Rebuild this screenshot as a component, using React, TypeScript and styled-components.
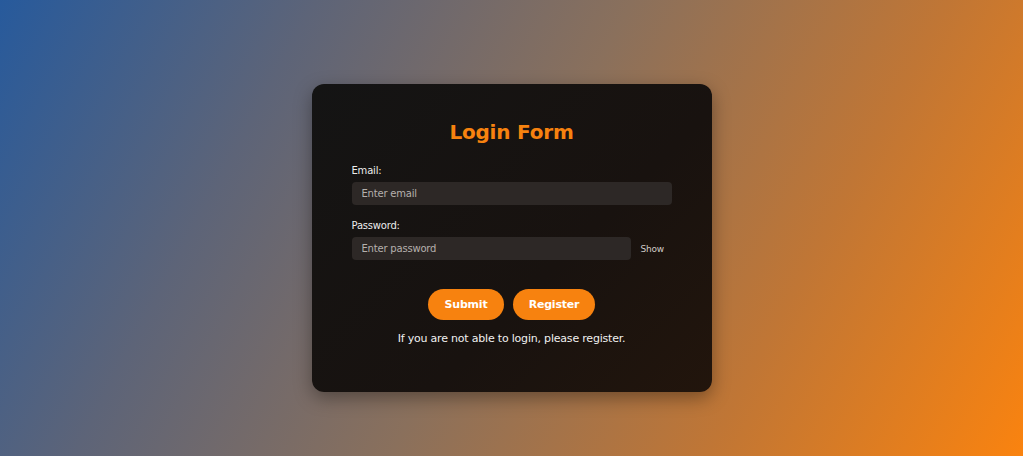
import React, { useState } from "react";
import styled, { createGlobalStyle } from "styled-components";

const Global = createGlobalStyle`
  html, body { margin: 0; padding: 0; }
  body {
    font-family: "DejaVu Sans", "Open Sans", sans-serif;
    width: 1023px;
    height: 456px;
    overflow: hidden;
  }
`;

const Page = styled.div`
  width: 1023px;
  height: 456px;
  box-sizing: border-box;
  background: linear-gradient(118deg, #275a9c 0%, #5d6478 25%, #8a705c 50%, #c07635 75%, #fa830f 100%);
  display: flex;
  justify-content: center;
  padding-top: 84px;
`;

const Card = styled.div`
  width: 400px;
  height: 308px;
  box-sizing: border-box;
  padding: 36px 40px 0;
  border-radius: 12px;
  background: linear-gradient(135deg, #141414 0%, #18120f 60%, #22150c 100%);
  box-shadow: 0 6px 18px rgba(0, 0, 0, 0.35);
  display: flex;
  flex-direction: column;
  color: #f2f2f2;
`;

const Title = styled.h1`
  margin: 0 0 20px;
  text-align: center;
  color: #f7820f;
  font-size: 20px;
  font-weight: 700;
  line-height: 24px;
  letter-spacing: -0.2px;
`;

const Field = styled.div`
  display: flex;
  flex-direction: column;
  gap: 5px;
  margin-bottom: 14px;
`;

const Label = styled.label`
  font-size: 10px;
  line-height: 13px;
  color: #ececec;
  letter-spacing: -0.2px;
`;

const InputRow = styled.div`
  display: flex;
  align-items: center;
  gap: 10px;
`;

const Input = styled.input`
  flex: 1;
  height: 23px;
  box-sizing: border-box;
  border: none;
  outline: none;
  border-radius: 4px;
  background: #2d2826;
  color: #ddd;
  padding: 0 10px;
  font-family: inherit;
  font-size: 10px;
  letter-spacing: -0.2px;
  &::placeholder { color: #b5b0ad; }
`;

const ShowToggle = styled.span`
  font-size: 9px;
  color: #cfcac7;
  width: 31px;
  letter-spacing: -0.2px;
  cursor: pointer;
`;

const Buttons = styled.div`
  display: flex;
  justify-content: center;
  gap: 9px;
  margin-top: 15px;
`;

const Button = styled.button<{ $w: number }>`
  width: ${(p) => p.$w}px;
  height: 31px;
  border: none;
  border-radius: 16px;
  background: #f7820f;
  color: #fff;
  font-family: inherit;
  font-weight: 700;
  font-size: 11px;
  letter-spacing: -0.2px;
  cursor: pointer;
`;

const Note = styled.p`
  margin: 12px 0 0;
  text-align: center;
  font-size: 11px;
  line-height: 14px;
  color: #f0f0f0;
  letter-spacing: -0.2px;
`;

export default function App() {
  const [show, setShow] = useState(false);
  return (
    <>
      <Global />
      <Page>
        <Card>
          <Title>Login Form</Title>
          <Field>
            <Label>Email:</Label>
            <InputRow>
              <Input type="email" placeholder="Enter email" />
            </InputRow>
          </Field>
          <Field>
            <Label>Password:</Label>
            <InputRow>
              <Input type={show ? "text" : "password"} placeholder="Enter password" />
              <ShowToggle onClick={() => setShow(!show)}>Show</ShowToggle>
            </InputRow>
          </Field>
          <Buttons>
            <Button $w={76}>Submit</Button>
            <Button $w={82}>Register</Button>
          </Buttons>
          <Note>If you are not able to login, please register.</Note>
        </Card>
      </Page>
    </>
  );
}
